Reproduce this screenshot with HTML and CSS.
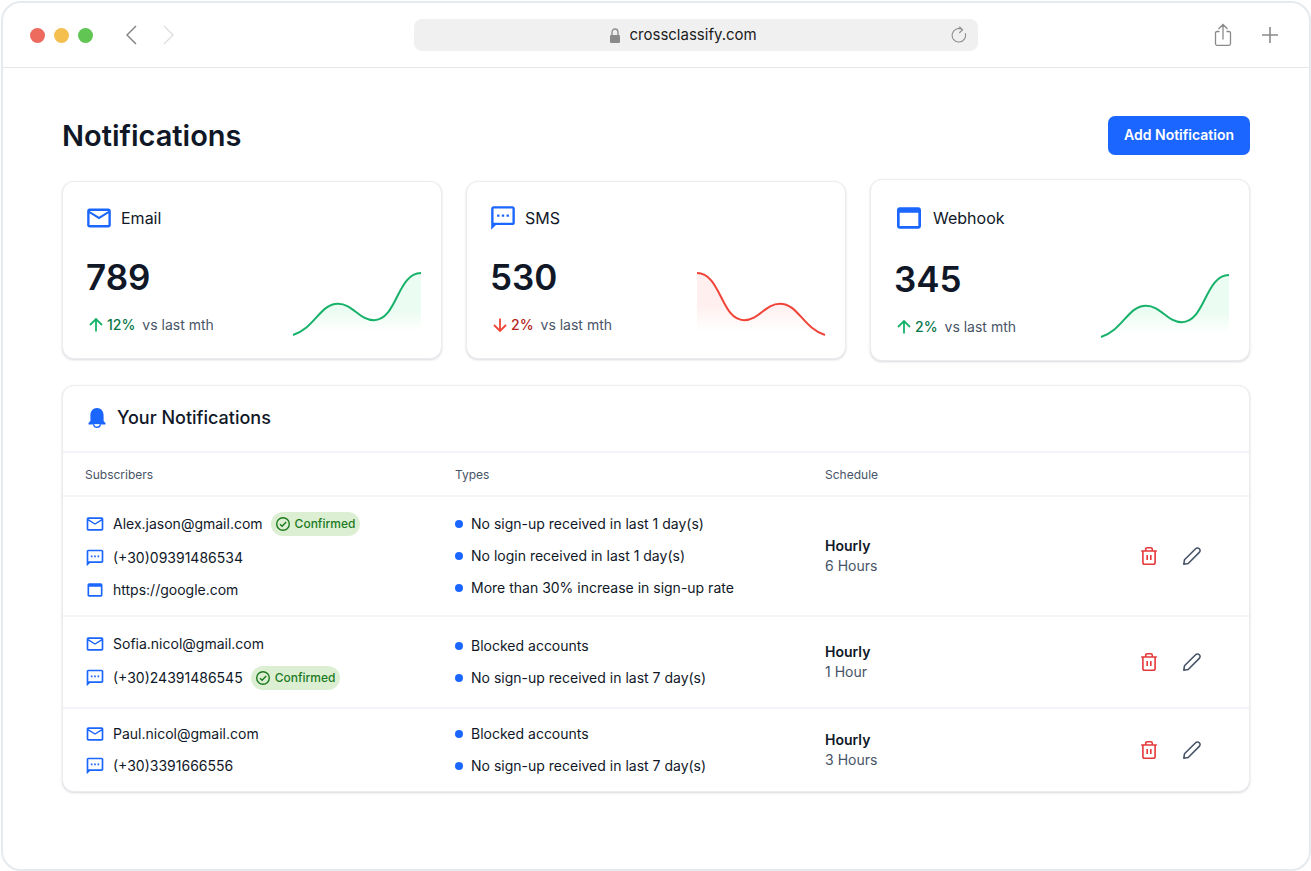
FILE: index.html
```html
<!DOCTYPE html>
<html lang="en">
<head>
<meta charset="utf-8">
<meta name="viewport" content="width=device-width, initial-scale=1">
<title>Notifications</title>
<link rel="stylesheet" href="styles.css">
</head>
<body>
<svg class="sprite" aria-hidden="true">
  <symbol id="mail" viewBox="0 0 24 24"><path d="M22 6c0-1.100-.9-2-2-2H4c-1.100 0-2 .9-2 2v12c0 1.100.9 2 2 2h16c1.100 0 2-.9 2-2V6zm-2 0l-8 5-8-5h16zm0 12H4V8l8 5 8-5v10z"/></symbol>
  <symbol id="sms" viewBox="0 0 24 24"><path d="M20 2H4c-1.100 0-2 .9-2 2v18l4-4h14c1.100 0 2-.9 2-2V4c0-1.100-.9-2-2-2zm0 14H4V4h16v12zM7 9h2v2H7zm4 0h2v2h-2zm4 0h2v2h-2z"/></symbol>
  <symbol id="web" viewBox="0 0 24 24"><path d="M19 4H5c-1.110 0-2 .9-2 2v12c0 1.100.89 2 2 2h14c1.100 0 2-.9 2-2V6c0-1.100-.9-2-2-2zm0 14H5V8h14v10z"/></symbol>
  <symbol id="check" viewBox="0 0 16 16"><g fill="none" stroke="currentColor" stroke-width="1.400"><circle cx="8" cy="8" r="6.300"/><path d="M5 8.200l2.100 2.100L11.200 6"/></g></symbol>
  <symbol id="up" viewBox="0 0 20 20"><path d="M10 16.500V4M4 10l6-6 6 6" fill="none" stroke="currentColor" stroke-width="1.800"/></symbol>
  <symbol id="down" viewBox="0 0 20 20"><path d="M10 3.500V16M4 10l6 6 6-6" fill="none" stroke="currentColor" stroke-width="1.800"/></symbol>
  <symbol id="trash" viewBox="0 0 20 20"><path d="M2.200 5h15.600M6.700 5V3.300q0-1.600 1.600-1.600h3.400q1.600 0 1.600 1.600V5M3.900 5v11.500q0 1.800 1.800 1.800h8.600q1.800 0 1.800-1.800V5M8.200 8.900v5M11.800 8.900v5" fill="none" stroke="currentColor" stroke-width="1.600"/></symbol>
  <symbol id="pencil" viewBox="0 0 20 20"><path d="M1.800 18.200l.7-4.400L13.600 2.700a2.600 2.600 0 0 1 3.700 3.700L6.200 17.500z" fill="none" stroke="currentColor" stroke-width="1.600" stroke-linejoin="round"/></symbol>
</svg>

<div class="window">
  <header class="toolbar">
    <div class="toolbar-left">
      <div class="lights"><span class="light light-red"></span><span class="light light-yellow"></span><span class="light light-green"></span></div>
      <div class="history">
        <button class="icon-button" type="button" aria-label="Back"><svg width="12" height="20" viewBox="0 0 12 20"><path d="M11 1L2 10l9 9" fill="none" stroke="#7f7f7f" stroke-width="1.400"/></svg></button>
        <button class="icon-button" type="button" aria-label="Forward" disabled><svg width="12" height="20" viewBox="0 0 12 20"><path d="M1 1l9 9-9 9" fill="none" stroke="#dedede" stroke-width="1.400"/></svg></button>
      </div>
    </div>
    <form class="address">
      <label class="address-field">
        <svg width="12" height="16" viewBox="0 0 12 16" aria-hidden="true"><rect x="1" y="8" width="10" height="8" rx="1.200" fill="#8a8a8a"/><path d="M3 8.500V5.500a3 3.500 0 0 1 6 0v3" fill="none" stroke="#8a8a8a" stroke-width="1.300"/></svg>
        <input class="address-input" type="text" aria-label="Address" value="crossclassify.com">
      </label>
      <button class="icon-button reload" type="button" aria-label="Reload"><svg width="16" height="18" viewBox="0 0 16 18"><path d="M11 3.400A6.700 6.700 0 1 0 14.200 7.200M6.900 2.400c1.600-.2 2.900.1 4.400 1.200M8.300.6L11.600 3.700 8.300 7" fill="none" stroke="#8e8e8e" stroke-width="1.100"/></svg></button>
    </form>
    <div class="toolbar-right">
      <button class="icon-button" type="button" aria-label="Share"><svg width="18" height="24" viewBox="0 0 18 24"><path d="M5.500 8.500H3Q1.500 8.500 1.500 10v10.800q0 1.500 1.500 1.500h12q1.500 0 1.500-1.500V10q0-1.500-1.500-1.500h-2.500M9 16.500V1.800M4.500 6L9 1.500 13.500 6" fill="none" stroke="#8a8a8a" stroke-width="1.300"/></svg></button>
      <button class="icon-button" type="button" aria-label="New tab"><svg width="16" height="16" viewBox="0 0 16 16"><path d="M8 0v16M0 8h16" stroke="#8a8a8a" stroke-width="1.600"/></svg></button>
    </div>
  </header>

  <main class="page">
    <div class="page-head">
      <h1 class="page-title">Notifications</h1>
      <button class="primary-button" type="button">Add Notification</button>
    </div>

    <section class="cards">
      <article class="card">
        <div class="card-head"><svg class="card-icon" viewBox="1 1 22 22"><use href="#mail" width="24" height="24"/></svg><h2 class="card-label">Email</h2></div>
        <div class="card-body">
          <div class="metric">
            <p class="metric-value">789</p>
            <p class="trend trend-up"><svg class="trend-icon"><use href="#up"/></svg><span class="trend-value">12%</span><span class="trend-note">vs last mth</span></p>
          </div>
          <svg class="chart" width="128" height="64" viewBox="0 0 128 64">
            <defs>
              <linearGradient id="fade-green" x1="0" y1="0" x2="0" y2="1"><stop offset=".6" stop-color="#ebfcf2"/><stop offset=".95" stop-color="#ebfcf2" stop-opacity="0"/></linearGradient>
              <linearGradient id="fade-red" x1="0" y1="0" x2="0" y2="1"><stop offset=".5" stop-color="#ffefef"/><stop offset=".95" stop-color="#ffefef" stop-opacity="0"/></linearGradient>
            </defs>
            <path d="M0 64C22 57 27 32.700 45 32.700C60 32.700 66 49.200 81 49.200C104 49.200 104 2 128 2V64z" fill="url(#fade-green)"/>
            <path d="M0 64C22 57 27 32.700 45 32.700C60 32.700 66 49.200 81 49.200C104 49.200 104 2 128 2" fill="none" stroke="#17b26a" stroke-width="2"/>
          </svg>
        </div>
      </article>
      <article class="card">
        <div class="card-head"><svg class="card-icon" viewBox="1 1 22 22"><use href="#sms" width="24" height="24"/></svg><h2 class="card-label">SMS</h2></div>
        <div class="card-body">
          <div class="metric">
            <p class="metric-value">530</p>
            <p class="trend trend-down"><svg class="trend-icon"><use href="#down"/></svg><span class="trend-value">2%</span><span class="trend-note">vs last mth</span></p>
          </div>
          <svg class="chart" width="128" height="64" viewBox="0 0 128 64">
            <path d="M128 64C106 57 101 32.700 83 32.700C68 32.700 62 49.200 47 49.200C24 49.200 24 2 0 2V64z" fill="url(#fade-red)"/>
            <path d="M128 64C106 57 101 32.700 83 32.700C68 32.700 62 49.200 47 49.200C24 49.200 24 2 0 2" fill="none" stroke="#f04438" stroke-width="2"/>
          </svg>
        </div>
      </article>
      <article class="card">
        <div class="card-head"><svg class="card-icon card-icon-large" viewBox="0.750 0.750 22.500 22.500"><use href="#web" width="24" height="24"/></svg><h2 class="card-label">Webhook</h2></div>
        <div class="card-body">
          <div class="metric">
            <p class="metric-value">345</p>
            <p class="trend trend-up"><svg class="trend-icon"><use href="#up"/></svg><span class="trend-value">2%</span><span class="trend-note">vs last mth</span></p>
          </div>
          <svg class="chart" width="128" height="64" viewBox="0 0 128 64">
            <path d="M0 64C22 57 27 32.700 45 32.700C60 32.700 66 49.200 81 49.200C104 49.200 104 2 128 2V64z" fill="url(#fade-green)"/>
            <path d="M0 64C22 57 27 32.700 45 32.700C60 32.700 66 49.200 81 49.200C104 49.200 104 2 128 2" fill="none" stroke="#17b26a" stroke-width="2"/>
          </svg>
        </div>
      </article>
    </section>

    <section class="panel">
      <div class="panel-head">
        <svg width="24" height="24" viewBox="0 0 24 24" aria-hidden="true"><path d="M3.500 18.500v-1.500L5.400 15V9.500C5.400 5 8 2 12 2s6.600 3 6.600 7.500V15l1.900 2v1.500z" fill="#1a66ff"/><path d="M8.700 18.200a3.300 3 0 0 0 6.600 0" fill="#fff" stroke="#1a66ff" stroke-width="1.400"/></svg>
        <h2 class="panel-title">Your Notifications</h2>
      </div>
      <table class="table">
        <thead>
          <tr><th class="col-wide" scope="col">Subscribers</th><th class="col-wide" scope="col">Types</th><th scope="col">Schedule</th><th class="col-actions" aria-label="Actions"></th></tr>
        </thead>
        <tbody>
          <tr>
            <td>
              <ul class="list">
                <li class="contact"><svg class="contact-icon"><use href="#mail"/></svg><span>Alex.jason@gmail.com</span><span class="badge"><svg class="badge-icon"><use href="#check"/></svg>Confirmed</span></li>
                <li class="contact"><svg class="contact-icon"><use href="#sms"/></svg><span>(+30)09391486534</span></li>
                <li class="contact"><svg class="contact-icon"><use href="#web"/></svg><span>https://google.com</span></li>
              </ul>
            </td>
            <td>
              <ul class="list">
                <li class="type">No sign-up received in last 1 day(s)</li>
                <li class="type">No login received in last 1 day(s)</li>
                <li class="type">More than 30% increase in sign-up rate</li>
              </ul>
            </td>
            <td><strong class="frequency">Hourly</strong><span class="interval">6 Hours</span></td>
            <td><div class="actions"><button class="icon-button delete" type="button" aria-label="Delete"><svg width="20" height="20"><use href="#trash"/></svg></button><button class="icon-button edit" type="button" aria-label="Edit"><svg width="20" height="20"><use href="#pencil"/></svg></button></div></td>
          </tr>
          <tr class="row-roomy">
            <td>
              <ul class="list">
                <li class="contact"><svg class="contact-icon"><use href="#mail"/></svg><span>Sofia.nicol@gmail.com</span></li>
                <li class="contact"><svg class="contact-icon"><use href="#sms"/></svg><span>(+30)24391486545</span><span class="badge"><svg class="badge-icon"><use href="#check"/></svg>Confirmed</span></li>
              </ul>
            </td>
            <td>
              <ul class="list">
                <li class="type">Blocked accounts</li>
                <li class="type">No sign-up received in last 7 day(s)</li>
              </ul>
            </td>
            <td><strong class="frequency">Hourly</strong><span class="interval">1 Hour</span></td>
            <td><div class="actions"><button class="icon-button delete" type="button" aria-label="Delete"><svg width="20" height="20"><use href="#trash"/></svg></button><button class="icon-button edit" type="button" aria-label="Edit"><svg width="20" height="20"><use href="#pencil"/></svg></button></div></td>
          </tr>
          <tr>
            <td>
              <ul class="list">
                <li class="contact"><svg class="contact-icon"><use href="#mail"/></svg><span>Paul.nicol@gmail.com</span></li>
                <li class="contact"><svg class="contact-icon"><use href="#sms"/></svg><span>(+30)3391666556</span></li>
              </ul>
            </td>
            <td>
              <ul class="list">
                <li class="type">Blocked accounts</li>
                <li class="type">No sign-up received in last 7 day(s)</li>
              </ul>
            </td>
            <td><strong class="frequency">Hourly</strong><span class="interval">3 Hours</span></td>
            <td><div class="actions"><button class="icon-button delete" type="button" aria-label="Delete"><svg width="20" height="20"><use href="#trash"/></svg></button><button class="icon-button edit" type="button" aria-label="Edit"><svg width="20" height="20"><use href="#pencil"/></svg></button></div></td>
          </tr>
        </tbody>
      </table>
    </section>
  </main>
</div>
</body>
</html>
```
FILE: styles.css
```css
* {
  box-sizing: border-box;
}

body {
  margin: 0;
  padding: 1px 0 0 1px;
  background: #fff;
  color: #101828;
  font-family: Inter, "Liberation Sans", sans-serif;
  font-size: 14px;
  line-height: 20px;
}

h1, h2, p, ul {
  margin: 0;
  padding: 0;
}

button, input {
  font: inherit;
  color: inherit;
}

svg {
  display: block;
  flex: none;
}

.sprite {
  display: none;
}

.window {
  display: flex;
  flex-direction: column;
  min-height: calc(100vh - 1px);
  border: 2px solid #e5eaef;
  border-radius: 20px;
}

/* Browser toolbar */

.toolbar {
  display: grid;
  grid-template-columns: 411fr 564fr 331fr;
  align-items: center;
  height: 65px;
  border-bottom: 1px solid #e3e7ea;
}

.toolbar-left,
.toolbar-right,
.lights,
.history {
  display: flex;
  align-items: center;
}

.toolbar-left {
  gap: 32px;
  padding-left: 27px;
}

.toolbar-right {
  justify-content: flex-end;
  gap: 30px;
  padding-right: 31px;
}

.lights {
  gap: 9px;
}

.history {
  gap: 26px;
}

.light {
  width: 15px;
  height: 15px;
  border-radius: 50%;
}

.light-red {
  background: #ed6a5e;
}

.light-yellow {
  background: #f5bf4f;
}

.light-green {
  background: #61c554;
}

.icon-button {
  padding: 0;
  border: 0;
  background: none;
  cursor: pointer;
}

.address {
  position: relative;
  display: flex;
  align-items: center;
  justify-content: center;
  height: 32px;
  padding-right: 18px;
  border-radius: 8px;
  background: #f0f0f0;
}

.address-field {
  display: flex;
  align-items: center;
  gap: 9px;
}

.address-input {
  width: 136px;
  padding: 0;
  border: 0;
  outline: 0;
  background: none;
  color: #202020;
  font-size: 15px;
}

.reload {
  position: absolute;
  right: 11px;
}

/* Page */

.page {
  display: flex;
  flex-direction: column;
  gap: 24px;
  padding: 48px 59px;
}

.page-head {
  display: flex;
  align-items: center;
  justify-content: space-between;
  height: 39px;
}

.page-title {
  font-size: 29px;
  font-weight: 600;
  line-height: 38px;
}

.primary-button {
  height: 39px;
  padding: 0 16px 2px;
  border: 0;
  border-radius: 7px;
  background: #1a66ff;
  color: #fff;
  font-weight: 600;
  cursor: pointer;
}

/* Summary cards */

.cards {
  display: grid;
  grid-template-columns: repeat(3, 1fr);
  align-items: center;
  gap: 24px;
}

.card,
.panel {
  border: 1px solid #eaecf0;
  border-radius: 12px;
  background: #fff;
  box-shadow: 0 1px 3px rgba(16, 24, 40, 0.1), 0 1px 2px rgba(16, 24, 40, 0.06);
}

.card {
  display: flex;
  flex-direction: column;
  gap: 24px;
  padding: 23px 20px 23px 23px;
}

.card-head {
  display: flex;
  align-items: center;
  gap: 9px;
}

.card-icon {
  width: 26px;
  height: 26px;
  fill: #1a66ff;
}

.card-icon-large {
  width: 30px;
  height: 30px;
}

.card-label {
  font-size: 16px;
  font-weight: 400;
  line-height: 24px;
}

.card-body {
  display: flex;
  align-items: flex-end;
  justify-content: space-between;
}

.metric {
  display: flex;
  flex-direction: column;
  gap: 16px;
}

.metric-value {
  font-size: 35px;
  font-weight: 600;
  line-height: 44px;
}

.trend {
  display: flex;
  align-items: center;
}

.trend-icon {
  width: 20px;
  height: 20px;
}

.trend-value {
  margin: 0 7px 0 1px;
  font-weight: 500;
}

.trend-up .trend-icon {
  color: #17b26a;
}

.trend-up .trend-value {
  color: #067647;
}

.trend-down .trend-icon {
  color: #f04438;
}

.trend-down .trend-value {
  color: #b42318;
}

.trend-note {
  color: #475467;
}

.chart {
  overflow: visible;
}

/* Notification table */

.panel-head {
  display: flex;
  align-items: center;
  gap: 8px;
  height: 67px;
  padding: 0 22px 2px;
  border-bottom: 2px solid #f2f4f7;
}

.panel-title {
  font-size: 18px;
  font-weight: 500;
  line-height: 28px;
}

.table {
  width: 100%;
  border-spacing: 0;
  table-layout: fixed;
}

.table th {
  padding: 13px 22px 11px;
  border-bottom: 2px solid #f2f4f7;
  color: #475467;
  font-size: 12px;
  font-weight: 400;
  line-height: 18px;
  text-align: left;
}

.table .col-wide {
  width: 31.2%;
}

.table .col-actions {
  width: 15%;
}

.table td {
  padding: 15px 22px;
  border-bottom: 2px solid #f2f4f7;
  vertical-align: middle;
}

.table .row-roomy td {
  padding-block: 17px;
}

.table tbody tr:last-child td {
  border-bottom: 0;
}

.list {
  display: flex;
  flex-direction: column;
  gap: 12px;
  list-style: none;
}

.contact {
  display: flex;
  align-items: center;
  gap: 8px;
}

.contact-icon {
  width: 20px;
  height: 20px;
  fill: #1a66ff;
}

.badge {
  display: flex;
  align-items: center;
  gap: 4px;
  height: 24px;
  padding: 0 5px 0 4px;
  border-radius: 12px;
  background: #dcefd3;
  color: #1c7a1e;
  font-size: 12px;
  font-weight: 500;
}

.badge-icon {
  width: 16px;
  height: 16px;
}

.type {
  display: flex;
  align-items: center;
  gap: 8px;
}

.type::before {
  content: "";
  width: 8px;
  height: 8px;
  border-radius: 50%;
  background: #1a66ff;
}

.frequency,
.interval {
  display: block;
}

.frequency {
  font-weight: 600;
}

.interval {
  color: #475467;
}

.actions {
  display: flex;
  justify-content: flex-end;
  gap: 23px;
  padding-right: 25px;
}

.delete {
  color: #e5383b;
}

.edit {
  color: #475467;
}
```
